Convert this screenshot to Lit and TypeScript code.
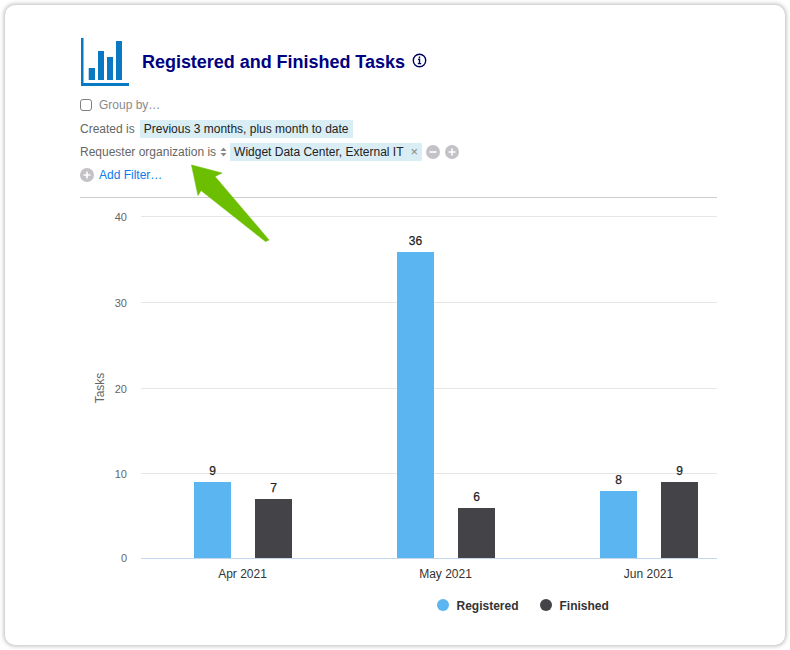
import { LitElement, html, css, svg } from "lit";
import { customElement } from "lit/decorators.js";

const BASE = 558.5, LEFT = 141, RIGHT = 717;
const ticks = [
  { v: 40, y: 216.5 },
  { v: 30, y: 302.5 },
  { v: 20, y: 388.5 },
  { v: 10, y: 473.5 },
];
const groups = [
  { label: "Apr 2021", cx: 242.5, reg: 9, regTop: 482, fin: 7, finTop: 499 },
  { label: "May 2021", cx: 445.5, reg: 36, regTop: 252, fin: 6, finTop: 508 },
  { label: "Jun 2021", cx: 648.5, reg: 8, regTop: 491, fin: 9, finTop: 482 },
];

@customElement("app-root")
export class AppRoot extends LitElement {
  static styles = css`
    :host { display: block; width: 790px; height: 650px; background: #fff; font-family: "Liberation Sans", Arial, sans-serif; font-size: 12px; color: #666; }
    .frame { position: relative; box-sizing: border-box; margin: 5px 0 0 5px; width: 780px; height: 640px; background: #fff; border-radius: 10px; box-shadow: 0 0 4px 1px rgba(0,0,0,.28); padding: 33px 68px 0 75px; }
    .head { display: flex; align-items: center; height: 48px; }
    .logo { width: 48px; height: 48px; display: block; flex: none; margin-left: 1px; }
    h1 { margin: 0 0 0 13px; font-size: 18px; line-height: 22px; font-weight: 700; color: #000080; letter-spacing: -0.03px; }
    .info { margin-left: 7px; width: 15px; height: 15px; display: block; position: relative; top: -1.5px; }
    .row { display: flex; align-items: center; height: 20px; margin-top: 3px; white-space: nowrap; }
    .group { margin-top: 9px; gap: 7px; color: #8a8a8a; }
    .created { margin-top: 4px; }
    .box { box-sizing: border-box; width: 12px; height: 12px; border: 1.5px solid #808080; border-radius: 3px; background: #fff; }
    .chip { display: flex; align-items: center; background: #d9edf5; color: #222; height: 18px; padding: 0 5px 0 4px; }
    .lab { margin-right: 5px; }
    .chip2 { gap: 7px; padding-right: 4px; }
    .x { color: #888; font-size: 13px; line-height: 18px; }
    .sort { width: 7px; height: 10px; display: block; margin: 0 3px 0 -1px; }
    .round { width: 14px; height: 14px; display: block; flex: none; }
    .minus { margin-left: 4px; margin-right: 5px; }
    .add { gap: 5px; color: #0a7cf0; }
    hr { margin: 12px 0 0; border: 0; border-top: 1px solid #ccc; height: 0; }
    .chart { display: block; width: 712px; height: 445px; margin-left: -75px; }
    .axis { font-size: 11px; fill: #666; }
    .title { font-size: 12px; fill: #666; }
    .cat { font-size: 12px; fill: #333; }
    .val { font-size: 12px; fill: #222; stroke: #222; stroke-width: .25px; }
    .leg { font-size: 12px; font-weight: 700; fill: #333; }
    .arrow { position: absolute; left: -5px; top: -5px; width: 790px; height: 650px; pointer-events: none; }
  `;

  private plus() {
    return html`<svg class="round" viewBox="0 0 14 14"><circle cx="7" cy="7" r="7" fill="#c4c2c7"/><path d="M3.5 7h7M7 3.5v7" stroke="#fff" stroke-width="1.6"/></svg>`;
  }

  render() {
    return html`
      <div class="frame">
        <div class="head">
          <svg class="logo" viewBox="0 0 48 48">
            <path d="M0 0h2.5v45H48v3H0z" fill="#0a79c4"/>
            <path d="M7.7 30H14v12H7.7zM17 13h6v29h-6zM26 19h6v23h-6zM35 3h6v39h-6z" fill="#0a79c4"/>
          </svg>
          <h1>Registered and Finished Tasks</h1>
          <svg class="info" viewBox="0 0 15 15">
            <circle cx="7.5" cy="7.5" r="6.2" fill="none" stroke="#000060" stroke-width="1.4"/>
            <path d="M6 6.4h1.5v4M5.8 10.6h3.4M7.5 3.6v1.6" fill="none" stroke="#000060" stroke-width="1.4"/>
          </svg>
        </div>
        <div class="row group"><span class="box"></span><span>Group by…</span></div>
        <div class="row created"><span class="lab">Created is</span><span class="chip">Previous 3 months, plus month to date</span></div>
        <div class="row">
          <span class="lab">Requester organization is</span>
          <svg class="sort" viewBox="0 0 7 10"><path d="M3.5 0.5 6.5 4h-6zM3.5 9.5 .5 6h6z" fill="#888"/></svg>
          <span class="chip chip2">Widget Data Center, External IT <span class="x">×</span></span>
          <svg class="round minus" viewBox="0 0 14 14"><circle cx="7" cy="7" r="7" fill="#c4c2c7"/><path d="M3.5 7h7" stroke="#fff" stroke-width="1.6"/></svg>
          ${this.plus()}
        </div>
        <div class="row add">${this.plus()}<span>Add Filter…</span></div>
        <hr />
        ${this.chart()}
        <svg class="arrow" viewBox="0 0 790 650">
          <path d="M191.5 165 222 173 215 176.5 269 240 265.5 241.5 201 190.5 198 195.5z" fill="#6cbf00" stroke="#6cbf00" stroke-width=".6" stroke-linejoin="round"/>
        </svg>
      </div>
    `;
  }

  private chart() {
    // The viewBox origin makes the chart's inner coordinates equal to page coordinates.
    return html`<svg class="chart" viewBox="5 198 712 445">
      ${ticks.map((t) => svg`<line x1=${LEFT} x2=${RIGHT} y1=${t.y} y2=${t.y} stroke="#e6e6e6"/>`)}
      <line x1=${LEFT} x2=${RIGHT} y1=${BASE} y2=${BASE} stroke="#c4d5ee"/>
      ${ticks.map((t) => svg`<text class="axis" x="127" y=${t.y + 4.5} text-anchor="end">${t.v}</text>`)}
      <text class="axis" x="127" y="562" text-anchor="end">0</text>
      <text class="title" transform="translate(104 388) rotate(-90)" text-anchor="middle">Tasks</text>
      ${groups.map(
        (g) => svg`
          <rect x=${g.cx - 48.5} y=${g.regTop} width="37" height=${558 - g.regTop} fill="#5ab5f0"/>
          <rect x=${g.cx + 12.5} y=${g.finTop} width="37" height=${558 - g.finTop} fill="#434348"/>
          <text class="val" x=${g.cx - 30} y=${g.regTop - 7} text-anchor="middle">${g.reg}</text>
          <text class="val" x=${g.cx + 31} y=${g.finTop - 7} text-anchor="middle">${g.fin}</text>
          <text class="cat" x=${g.cx} y="578" text-anchor="middle">${g.label}</text>`
      )}
      <circle cx="443" cy="605" r="6" fill="#5ab5f0"/>
      <text class="leg" x="456.5" y="609.5">Registered</text>
      <circle cx="546" cy="605" r="6" fill="#434348"/>
      <text class="leg" x="559.5" y="609.5">Finished</text>
    </svg>`;
  }
}
